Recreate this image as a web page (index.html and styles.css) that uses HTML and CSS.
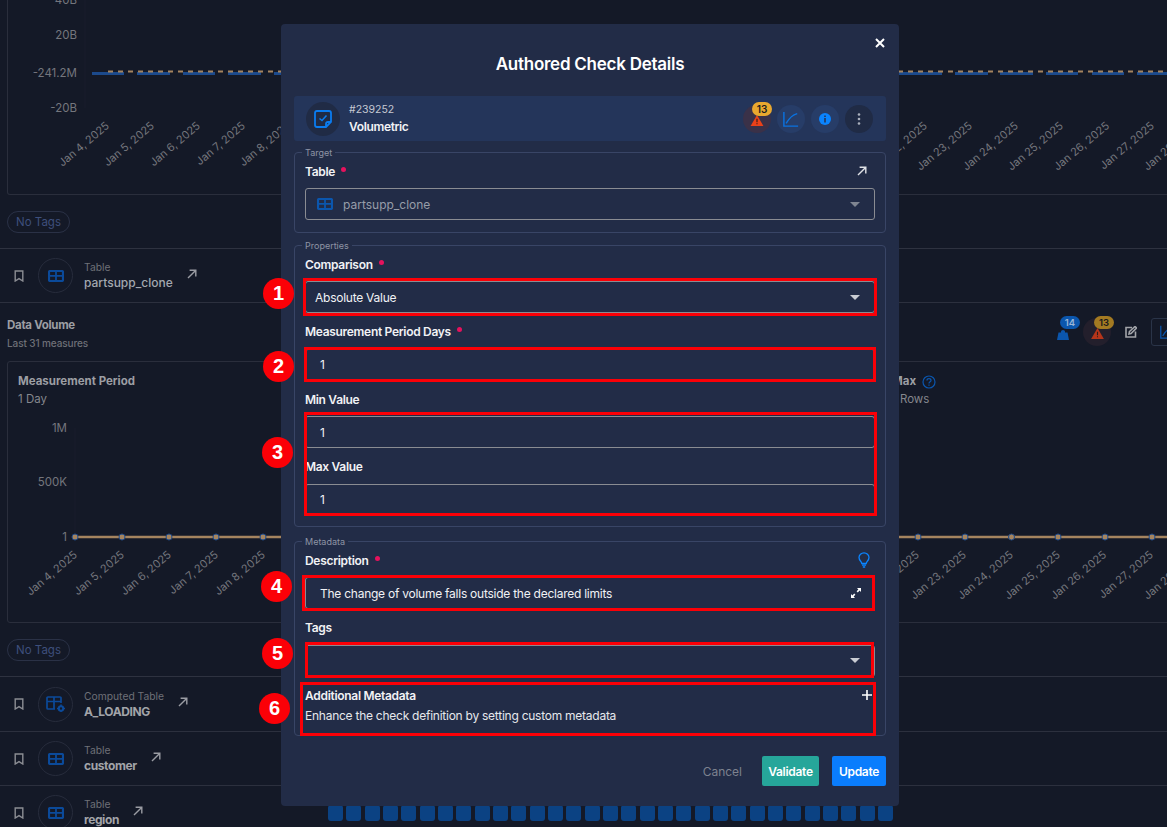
FILE: index.html
```html
<!DOCTYPE html>
<html lang="en">
<head>
    <meta charset="UTF-8">
    <meta name="viewport" content="width=device-width, initial-scale=1.0">
    <title>Authored Check Details</title>
    <link rel="stylesheet" href="styles.css">
</head>
<body>
    <svg class="icon-defs" aria-hidden="true">
        <symbol id="i-table" viewBox="0 0 16 12">
            <rect x="1" y="1" width="14" height="10" rx="1.2" fill="none" stroke="currentColor" stroke-width="2.2"/>
            <path d="M1 5.8H15M8 1V11" stroke="currentColor" stroke-width="1.8"/>
        </symbol>
        <symbol id="i-bookmark" viewBox="0 0 10 12">
            <path d="M1.2 1H8.8V11L5 8.6 1.2 11Z" fill="none" stroke="currentColor" stroke-width="1.4"/>
        </symbol>
        <symbol id="i-arrow" viewBox="0 0 10 10">
            <path d="M1 9L8.6 1.4M2.6 1.2H8.8V7.4" fill="none" stroke="currentColor" stroke-width="1.4"/>
        </symbol>
        <symbol id="i-warn" viewBox="0 0 14 12">
            <path d="M7 0L14 12H0Z" fill="currentColor"/>
            <path d="M6.4 4H7.6V8H6.4ZM6.4 9H7.6V10.2H6.4Z" fill="#2b1a1a"/>
        </symbol>
        <symbol id="i-trend" viewBox="0 0 18 18">
            <path d="M1 1V17H17" fill="none" stroke="currentColor" stroke-width="1.6"/>
            <path d="M3.5 14C7 8 10 4.5 16 3" fill="none" stroke="currentColor" stroke-width="1.6"/>
        </symbol>
    </svg>

    <div class="page">
        <section class="chart-card chart-card-top">
            <svg class="chart" viewBox="8 0 1159 193">
                <path class="axis" d="M85 0V108"/>
                <g class="y-labels">
                    <text x="77" y="4">40B</text>
                    <text x="77" y="39">20B</text>
                    <text x="77" y="77">-241.2M</text>
                    <text x="77" y="112">-20B</text>
                </g>
                <path class="bars" d="M92 73.5H124M137 73.5H170M183 73.5H215M228 73.5H261M274 73.5H281M899 73.5H942M955 73.5H988M1000 73.5H1033M1046 73.5H1078M1092 73.5H1124M1137 73.5H1169"/>
                <path class="limit" d="M108 71.5H1167"/>
                <g class="x-labels">
                    <text transform="translate(110 127) rotate(-40)">Jan 4, 2025</text>
                    <text transform="translate(155 127) rotate(-40)">Jan 5, 2025</text>
                    <text transform="translate(201 127) rotate(-40)">Jan 6, 2025</text>
                    <text transform="translate(246 127) rotate(-40)">Jan 7, 2025</text>
                    <text transform="translate(291 127) rotate(-40)">Jan 8, 2025</text>
                    <text transform="translate(928 127) rotate(-40)">Jan 22, 2025</text>
                    <text transform="translate(973 127) rotate(-40)">Jan 23, 2025</text>
                    <text transform="translate(1019 127) rotate(-40)">Jan 24, 2025</text>
                    <text transform="translate(1064 127) rotate(-40)">Jan 25, 2025</text>
                    <text transform="translate(1110 127) rotate(-40)">Jan 26, 2025</text>
                    <text transform="translate(1155 127) rotate(-40)">Jan 27, 2025</text>
                    <text transform="translate(1200 127) rotate(-40)">Jan 28, 2025</text>
                </g>
            </svg>
        </section>
        <div class="tags-bar"><span class="tag-pill">No Tags</span></div>

        <div class="table-row">
            <svg class="row-mark"><use href="#i-bookmark"/></svg>
            <span class="row-badge"><svg class="row-table"><use href="#i-table"/></svg></span>
            <div class="row-text">
                <span class="row-kind">Table</span>
                <span class="row-name row-name-light">partsupp_clone</span>
            </div>
            <svg class="row-link"><use href="#i-arrow"/></svg>
        </div>

        <div class="volume-head">
            <div class="volume-text">
                <h3 class="volume-title">Data Volume</h3>
                <p class="volume-sub">Last 31 measures</p>
            </div>
            <div class="volume-actions">
                <span class="act">
                    <svg class="act-weight" viewBox="0 0 12 10"><path d="M4 2.5V1.5Q4 0 6 0T8 1.5V2.5H10.5L12 10H0L1.5 2.5Z" fill="currentColor"/></svg>
                    <span class="act-count act-count-blue">14</span>
                </span>
                <span class="act act-danger">
                    <svg class="act-warn"><use href="#i-warn"/></svg>
                    <span class="act-count act-count-amber">13</span>
                </span>
                <span class="act">
                    <svg class="act-edit" viewBox="0 0 12 12"><path d="M7 1.5H1V11H10.5V5.5M4.5 5.5L10 0.5L11.5 2L6 7.5L4 8Z" fill="none" stroke="currentColor" stroke-width="1.6"/></svg>
                </span>
                <span class="act-box"><svg class="act-trend"><use href="#i-trend"/></svg></span>
            </div>
        </div>

        <section class="chart-card">
            <div class="stats">
                <div>
                    <div class="stat-name">Measurement Period</div>
                    <div class="stat-value">1 Day</div>
                </div>
                <div>
                    <div class="stat-name">Max
                        <svg class="stat-help" viewBox="0 0 14 14"><circle cx="7" cy="7" r="6" fill="none" stroke="currentColor" stroke-width="1.2"/><path d="M5 5.4Q5 3.6 7 3.6T9 5.4C9 6.8 7 6.8 7 8.4M7 9.6V10.8" fill="none" stroke="currentColor" stroke-width="1.2"/></svg>
                    </div>
                    <div class="stat-value">1 Rows</div>
                </div>
            </div>
            <svg class="chart" viewBox="8 410 1159 212">
                <path class="axis" d="M75 428V537"/>
                <g class="y-labels">
                    <text x="67" y="432">1M</text>
                    <text x="67" y="486">500K</text>
                    <text x="67" y="541">1</text>
                </g>
                <path class="line" d="M75 537H1167"/>
                <g class="dots">
                    <circle cx="75" cy="537" r="3"/><circle cx="122" cy="537" r="3"/><circle cx="169" cy="537" r="3"/>
                    <circle cx="216" cy="537" r="3"/><circle cx="263" cy="537" r="3"/><circle cx="918" cy="537" r="3"/>
                    <circle cx="965" cy="537" r="3"/><circle cx="1011.5" cy="537" r="3"/><circle cx="1058" cy="537" r="3"/>
                    <circle cx="1105" cy="537" r="3"/><circle cx="1152" cy="537" r="3"/>
                </g>
                <g class="x-labels">
                    <text transform="translate(78 556) rotate(-40)">Jan 4, 2025</text>
                    <text transform="translate(125 556) rotate(-40)">Jan 5, 2025</text>
                    <text transform="translate(172 556) rotate(-40)">Jan 6, 2025</text>
                    <text transform="translate(219 556) rotate(-40)">Jan 7, 2025</text>
                    <text transform="translate(266 556) rotate(-40)">Jan 8, 2025</text>
                    <text transform="translate(920 556) rotate(-40)">Jan 22, 2025</text>
                    <text transform="translate(967 556) rotate(-40)">Jan 23, 2025</text>
                    <text transform="translate(1014 556) rotate(-40)">Jan 24, 2025</text>
                    <text transform="translate(1061 556) rotate(-40)">Jan 25, 2025</text>
                    <text transform="translate(1107 556) rotate(-40)">Jan 26, 2025</text>
                    <text transform="translate(1154 556) rotate(-40)">Jan 27, 2025</text>
                    <text transform="translate(1200 556) rotate(-40)">Jan 28, 2025</text>
                </g>
            </svg>
        </section>
        <div class="tags-bar"><span class="tag-pill">No Tags</span></div>

        <div class="table-row table-row-tall">
            <svg class="row-mark"><use href="#i-bookmark"/></svg>
            <span class="row-badge">
                <svg class="row-computed" viewBox="0 0 19 16">
                    <path d="M15 7V2Q15 1 14 1H2Q1 1 1 2V12Q1 13 2 13H9M1 5.5H15M8 1V13" fill="none" stroke="currentColor" stroke-width="1.7"/>
                    <circle cx="15" cy="12.5" r="2.2" fill="none" stroke="currentColor" stroke-width="2"/>
                    <path d="M15 8.5V10M15 15V16.5M11 12.5H12.5M17.5 12.5H19" stroke="currentColor" stroke-width="1.5"/>
                </svg>
            </span>
            <div class="row-text">
                <span class="row-kind">Computed Table</span>
                <span class="row-name">A_LOADING</span>
            </div>
            <svg class="row-link"><use href="#i-arrow"/></svg>
        </div>
        <div class="table-row">
            <svg class="row-mark"><use href="#i-bookmark"/></svg>
            <span class="row-badge"><svg class="row-table"><use href="#i-table"/></svg></span>
            <div class="row-text">
                <span class="row-kind">Table</span>
                <span class="row-name">customer</span>
            </div>
            <svg class="row-link"><use href="#i-arrow"/></svg>
        </div>
        <div class="table-row">
            <svg class="row-mark"><use href="#i-bookmark"/></svg>
            <span class="row-badge"><svg class="row-table"><use href="#i-table"/></svg></span>
            <div class="row-text">
                <span class="row-kind">Table</span>
                <span class="row-name">region</span>
            </div>
            <svg class="row-link"><use href="#i-arrow"/></svg>
            <div class="history">
                <i></i><i></i><i></i><i></i><i></i><i></i><i></i><i></i><i></i><i></i>
                <i></i><i></i><i></i><i></i><i></i><i></i><i></i><i></i><i></i><i></i>
                <i></i><i></i><i></i><i></i><i></i><i></i><i></i><i></i><i></i><i></i>
                <i></i>
            </div>
        </div>
    </div>

    <div class="modal">
        <button class="modal-close" aria-label="Close">
            <svg viewBox="0 0 10 10"><path d="M1 1L9 9M9 1L1 9" stroke="currentColor" stroke-width="2"/></svg>
        </button>
        <h2 class="modal-title">Authored Check Details</h2>

        <div class="check-bar">
            <span class="check-icon">
                <svg viewBox="0 0 18 18"><path d="M3 1H15Q17 1 17 3V12L12 17H3Q1 17 1 15V3Q1 1 3 1ZM12 17V14Q12 12 14 12H17" fill="none" stroke="currentColor" stroke-width="1.8"/><path d="M5.5 8.5L8 10.5L12.5 5.5" fill="none" stroke="currentColor" stroke-width="1.6"/></svg>
            </span>
            <div class="check-text">
                <span class="check-id">#239252</span>
                <span class="check-type">Volumetric</span>
            </div>
            <div class="check-actions">
                <span class="round round-danger">
                    <svg class="round-warn"><use href="#i-warn"/></svg>
                    <span class="round-count">13</span>
                </span>
                <span class="round round-blue"><svg class="round-trend"><use href="#i-trend"/></svg></span>
                <span class="round round-blue">
                    <svg class="round-info" viewBox="0 0 12 12"><circle cx="6" cy="6" r="6" fill="currentColor"/><path d="M5.2 2.4H6.8V3.9H5.2ZM5.2 5H6.8V9.6H5.2Z" fill="#24355a"/></svg>
                </span>
                <span class="round round-dark">
                    <svg class="round-more" viewBox="0 0 4 12"><circle cx="2" cy="1.5" r="1.3" fill="currentColor"/><circle cx="2" cy="6" r="1.3" fill="currentColor"/><circle cx="2" cy="10.5" r="1.3" fill="currentColor"/></svg>
                </span>
            </div>
        </div>

        <fieldset class="group group-target">
            <legend>Target</legend>
            <div class="field">
                <div class="field-label">
                    <span class="req">Table</span>
                    <svg class="label-icon"><use href="#i-arrow"/></svg>
                </div>
                <div class="control control-muted">
                    <svg class="control-table"><use href="#i-table"/></svg>
                    <span>partsupp_clone</span>
                    <span class="caret"></span>
                </div>
            </div>
        </fieldset>

        <fieldset class="group group-props">
            <legend>Properties</legend>
            <div class="field">
                <div class="field-label"><span class="req">Comparison</span></div>
                <div class="control control-select">
                    <span>Absolute Value</span>
                    <span class="caret"></span>
                </div>
            </div>
            <div class="field">
                <div class="field-label"><span class="req">Measurement Period Days</span></div>
                <div class="control">1</div>
            </div>
            <div class="field">
                <div class="field-label"><span>Min Value</span></div>
                <div class="control">1</div>
            </div>
            <div class="field">
                <div class="field-label"><span>Max Value</span></div>
                <div class="control">1</div>
            </div>
        </fieldset>

        <fieldset class="group group-meta">
            <legend>Metadata</legend>
            <div class="field">
                <div class="field-label">
                    <span class="req">Description</span>
                    <svg class="label-bulb" viewBox="0 0 12 16"><path d="M3.8 11.5C3.8 9.5 1 8.8 1 5.6A5 4.8 0 0 1 11 5.6C11 8.8 8.2 9.5 8.2 11.5ZM4 13.2H8M4.8 15H7.2" fill="none" stroke="currentColor" stroke-width="1.3"/></svg>
                </div>
                <div class="control">
                    <span>The change of volume falls outside the declared limits</span>
                    <svg class="control-expand" viewBox="0 0 10 10"><path d="M6 0H10V4L8.6 2.6L6.8 4.4L5.6 3.2L7.4 1.4ZM4 10H0V6L1.4 7.4L3.2 5.6L4.4 6.8L2.6 8.6Z" fill="currentColor"/></svg>
                </div>
            </div>
            <div class="field">
                <div class="field-label"><span>Tags</span></div>
                <div class="control control-select">
                    <span></span>
                    <span class="caret"></span>
                </div>
            </div>
            <div class="extra">
                <div class="extra-head">
                    <span>Additional Metadata</span>
                    <svg class="extra-plus" viewBox="0 0 10 10"><path d="M5 0V10M0 5H10" stroke="currentColor" stroke-width="1.6"/></svg>
                </div>
                <p class="extra-text">Enhance the check definition by setting custom metadata</p>
            </div>
        </fieldset>

        <div class="modal-foot">
            <button class="btn btn-cancel">Cancel</button>
            <button class="btn btn-validate">Validate</button>
            <button class="btn btn-update">Update</button>
        </div>
    </div>

    <!-- annotation marks drawn over the screenshot -->
    <div class="mark mark-1"></div>
    <div class="mark mark-2"></div>
    <div class="mark mark-3"></div>
    <div class="mark mark-4"></div>
    <div class="mark mark-5"></div>
    <div class="mark mark-6"></div>
    <div class="step step-1">1</div>
    <div class="step step-2">2</div>
    <div class="step step-3">3</div>
    <div class="step step-4">4</div>
    <div class="step step-5">5</div>
    <div class="step step-6">6</div>
</body>
</html>
```

FILE: styles.css
```css
* {
    margin: 0;
    padding: 0;
    box-sizing: border-box;
    font-family: Inter, "Noto Sans", sans-serif;
}

html, body {
    height: 827px;
    overflow: hidden;
}

body {
    position: relative;
    background-color: #141927;
    color: #9a9ca3;
}

.icon-defs {
    display: none;
}

svg {
    display: block;
    flex: none;
}

/* page behind the dialog */
.page {
    width: 1200px;
    height: 827px;
    overflow: hidden;
}

.chart-card {
    margin-left: 7px;
    border: 1px solid #2a2e3c;
    border-radius: 3px;
}

.chart-card-top {
    height: 195px;
    border-top: none;
    border-radius: 0 0 3px 3px;
}

.chart {
    width: 1159px;
}

.chart-card-top .chart {
    height: 193px;
}

.chart-card .stats + .chart {
    height: 212px;
}

.chart text {
    font-size: 11px;
    fill: #74767d;
}

.y-labels text {
    font-size: 11.5px;
    text-anchor: end;
}

.x-labels text {
    text-anchor: end;
}

.axis {
    stroke: #181d2c;
    stroke-width: 1;
}

.bars {
    stroke: #1c4a8c;
    stroke-width: 3;
}

.limit {
    stroke: #a5845f;
    stroke-width: 2;
    stroke-dasharray: 5 5;
}

.line {
    stroke: #a5845f;
    stroke-width: 2.5;
}

.dots circle {
    fill: #a5845f;
    stroke: #1c4a8c;
    stroke-width: 1;
}

.tags-bar {
    height: 54px;
    padding: 15px 0 0 7px;
    border-bottom: 1px solid #2e3240;
}

.tag-pill {
    display: inline-block;
    height: 22px;
    padding: 0 8px;
    border: 1px solid #2a3146;
    border-radius: 11px;
    font-size: 11.5px;
    line-height: 20px;
    color: #3e4f7c;
}

.table-row {
    display: flex;
    align-items: center;
    height: 54px;
    padding-left: 14px;
    border-bottom: 1px solid #2c303e;
}

.table-row-tall {
    height: 55px;
}

.row-mark {
    width: 10px;
    height: 12px;
    color: #8b8d93;
}

.row-badge {
    display: flex;
    align-items: center;
    justify-content: center;
    width: 35px;
    height: 35px;
    margin-left: 14px;
    border: 1px solid #272c3c;
    border-radius: 50%;
}

.row-table {
    width: 16px;
    height: 12px;
    color: #0b4a9a;
}

.row-computed {
    width: 19px;
    height: 16px;
    color: #0b4a9a;
}

.row-text {
    display: flex;
    flex-direction: column;
    margin-left: 11px;
}

.row-kind {
    font-size: 10.3px;
    line-height: 15px;
    color: #6e7077;
}

.row-name {
    font-size: 12px;
    font-weight: 700;
    line-height: 16px;
    letter-spacing: -0.4px;
    color: #a2a4a9;
}

.row-name-light {
    font-weight: 500;
    letter-spacing: 0;
    color: #a3a8b0;
}

.row-link {
    width: 10px;
    height: 10px;
    margin: -4px 0 0 14px;
    color: #9a9ca3;
}

.history {
    display: flex;
    gap: 3.33px;
    margin-left: auto;
    margin-right: 307px;
}

.history i {
    display: block;
    width: 15px;
    height: 16px;
    background-color: #0b4283;
    border-radius: 3px;
}

.volume-head {
    display: flex;
    align-items: center;
    justify-content: space-between;
    height: 58px;
    padding: 0 17px 0 7px;
}

.volume-text {
    padding-top: 3px;
}

.volume-title {
    font-size: 11.5px;
    font-weight: 700;
    line-height: 18px;
    letter-spacing: -0.3px;
    color: #9c9ea3;
}

.volume-sub {
    margin-top: 1px;
    font-size: 10px;
    font-weight: 500;
    line-height: 16px;
    letter-spacing: -0.1px;
    color: #6e7077;
}

.volume-actions {
    display: flex;
    align-items: center;
    gap: 6px;
}

.act {
    position: relative;
    display: flex;
    align-items: center;
    justify-content: center;
    width: 28px;
    height: 28px;
    border-radius: 50%;
}

.act-danger {
    background-color: #231f2c;
}

.act-weight {
    width: 12px;
    height: 10px;
    margin-top: 5px;
    color: #0b56ad;
}

.act-warn {
    width: 13px;
    height: 11px;
    margin-top: 2px;
    color: #b5351a;
}

.act-edit {
    width: 12px;
    height: 12px;
    color: #a2a4a9;
}

.act-count {
    position: absolute;
    top: -2px;
    left: 11px;
    width: 20px;
    height: 13px;
    border-radius: 7px;
    font-size: 9.5px;
    font-weight: 600;
    line-height: 13px;
    text-align: center;
}

.act-count-blue {
    background-color: #0b56ad;
    color: #9ab6d8;
}

.act-count-amber {
    background-color: #a37a22;
    color: #17181c;
}

.act-box {
    display: flex;
    align-items: center;
    justify-content: center;
    width: 32px;
    height: 28px;
    border: 1px solid #2a3448;
    border-radius: 3px;
}

.act-trend {
    width: 14px;
    height: 14px;
    color: #0b56ad;
}

.stats {
    display: grid;
    grid-template-columns: 874px auto;
    height: 48px;
    padding: 11px 0 0 10px;
}

.stat-name {
    display: flex;
    align-items: center;
    gap: 6px;
    font-size: 11.5px;
    font-weight: 700;
    line-height: 17px;
    color: #9c9ea3;
}

.stat-value {
    font-size: 11.5px;
    line-height: 19px;
    color: #85878d;
}

.stat-help {
    width: 14px;
    height: 14px;
    color: #0b56ad;
}

/* dialog */
.modal {
    position: absolute;
    top: 24px;
    left: 281px;
    width: 618px;
    height: 782px;
    padding: 0 13px;
    background-color: #222c47;
    border-radius: 4px;
    color: #f1f2f5;
}

.modal-close {
    position: absolute;
    top: 14px;
    right: 14px;
    width: 10px;
    height: 10px;
    background: none;
    border: none;
    color: #ffffff;
}

.modal-title {
    padding-top: 24px;
    margin-bottom: 16px;
    font-size: 17px;
    font-weight: 600;
    line-height: 32px;
    letter-spacing: -0.25px;
    text-align: center;
    color: #ffffff;
}

.check-bar {
    display: flex;
    align-items: center;
    height: 45px;
    padding: 0 13px 0 12px;
    background-color: #24355a;
    border-radius: 3px;
}

.check-icon {
    display: flex;
    align-items: center;
    justify-content: center;
    width: 34px;
    height: 34px;
    background-color: #202b45;
    border-radius: 50%;
    color: #0a7cf0;
}

.check-icon svg {
    width: 18px;
    height: 18px;
}

.check-text {
    display: flex;
    flex-direction: column;
    margin-left: 9px;
}

.check-id {
    font-size: 10.5px;
    line-height: 16px;
    color: #c6cad3;
}

.check-type {
    font-size: 12px;
    font-weight: 600;
    line-height: 17px;
    letter-spacing: -0.35px;
    color: #f1f2f5;
}

.check-actions {
    display: flex;
    gap: 6px;
    margin-left: auto;
}

.round {
    position: relative;
    display: flex;
    align-items: center;
    justify-content: center;
    width: 28px;
    height: 28px;
    border-radius: 50%;
}

.round-danger {
    background-color: #3a3148;
}

.round-blue {
    background-color: #273d68;
}

.round-dark {
    background-color: #202b45;
}

.round-warn {
    width: 14px;
    height: 11px;
    margin-top: 3px;
    color: #eb4119;
}

.round-count {
    position: absolute;
    top: -3px;
    left: 9px;
    width: 20px;
    height: 14px;
    background-color: #e9a82f;
    border-radius: 7px;
    font-size: 10px;
    font-weight: 600;
    line-height: 14px;
    text-align: center;
    color: #1b1c20;
}

.round-trend {
    width: 16px;
    height: 16px;
    color: #0a72e0;
}

.round-info {
    width: 12px;
    height: 12px;
    color: #0a84ff;
}

.round-more {
    width: 4px;
    height: 12px;
    color: #aab0bd;
}

.group {
    min-width: 0;
    padding: 5px 10px 12px;
    border: 1px solid #394566;
    border-radius: 4px;
}

.group legend {
    margin-left: -3px;
    padding: 0 3px;
    font-size: 9px;
    line-height: 11px;
    color: #8e94a5;
}

.group-target {
    margin-top: 6px;
}

.group-props {
    margin-top: 7px;
    padding-bottom: 10.5px;
}

.group-meta {
    margin-top: 9px;
    padding-bottom: 11px;
}

.field + .field {
    margin-top: 10.5px;
}

.field-label {
    display: flex;
    align-items: center;
    justify-content: space-between;
    height: 16px;
    margin-bottom: 9px;
    font-size: 12px;
    font-weight: 600;
    letter-spacing: -0.3px;
    color: #f1f2f5;
}

.req::after {
    content: "";
    display: inline-block;
    width: 5px;
    height: 5px;
    margin: 0 0 6px 6px;
    background-color: #e6125d;
    border-radius: 50%;
    vertical-align: middle;
}

.label-icon {
    width: 10px;
    height: 10px;
    margin-right: 8px;
    color: #dfe1e6;
}

.label-bulb {
    width: 12px;
    height: 16px;
    margin-right: 5px;
    color: #0a84ff;
}

.control {
    display: flex;
    align-items: center;
    justify-content: space-between;
    height: 32px;
    padding: 0 14px;
    border: 1px solid #8a8c92;
    border-radius: 3px;
    font-size: 12px;
    letter-spacing: -0.25px;
    color: #f1f2f5;
}

.control-select {
    padding: 0 14px 0 9px;
}

.control-muted {
    justify-content: flex-start;
    gap: 10px;
    padding: 0 14px 0 11px;
    letter-spacing: 0;
    color: #979da9;
}

.control-muted .caret {
    margin-left: auto;
    border-top-color: #7f8591;
}

.control-table {
    width: 16px;
    height: 12px;
    color: #0b56ad;
}

.control-expand {
    width: 10px;
    height: 10px;
    margin-right: -1px;
    color: #ffffff;
}

.caret {
    width: 0;
    height: 0;
    border-left: 5px solid transparent;
    border-right: 5px solid transparent;
    border-top: 5px solid #c9ccd3;
}

.extra {
    margin-top: 10.5px;
}

.extra-head {
    display: flex;
    align-items: center;
    justify-content: space-between;
    height: 16px;
    font-size: 12px;
    font-weight: 600;
    letter-spacing: -0.3px;
}

.extra-plus {
    width: 10px;
    height: 10px;
    margin-right: 3px;
    color: #ffffff;
}

.extra-text {
    margin-top: 5px;
    font-size: 12px;
    line-height: 16px;
    letter-spacing: -0.25px;
    color: #e6e8ec;
}

.modal-foot {
    display: flex;
    justify-content: flex-end;
    gap: 13px;
    margin-top: 20px;
}

.btn {
    height: 30px;
    border: none;
    border-radius: 2px;
    font-size: 12px;
    font-weight: 600;
    letter-spacing: -0.3px;
    color: #ffffff;
}

.btn-cancel {
    margin-right: 7px;
    background: none;
    font-weight: 400;
    letter-spacing: 0;
    color: #7d828f;
}

.btn-validate {
    width: 57px;
    background-color: #26a69a;
}

.btn-update {
    width: 54px;
    background-color: #0a7dfd;
}

/* red annotations */
.mark {
    position: absolute;
    border: 3px solid #fb0007;
}

.mark-1 { left: 303px; top: 278px; width: 574px; height: 38px; }
.mark-2 { left: 304px; top: 347px; width: 572px; height: 35px; }
.mark-3 { left: 304px; top: 412px; width: 573px; height: 104px; }
.mark-4 { left: 302px; top: 575px; width: 573px; height: 36px; }
.mark-5 { left: 305px; top: 642px; width: 569px; height: 36px; }
.mark-6 { left: 300px; top: 682px; width: 576px; height: 54px; }

.step {
    position: absolute;
    width: 31px;
    height: 31px;
    background-color: #fb0007;
    border-radius: 50%;
    font-family: "Liberation Sans", sans-serif;
    font-size: 20px;
    font-weight: 700;
    line-height: 31px;
    text-align: center;
    color: #ffffff;
}

.step-1 { left: 263px; top: 278px; }
.step-2 { left: 263px; top: 351px; }
.step-3 { left: 262px; top: 437px; }
.step-4 { left: 261px; top: 571px; }
.step-5 { left: 262px; top: 638px; }
.step-6 { left: 259px; top: 693px; }
```
